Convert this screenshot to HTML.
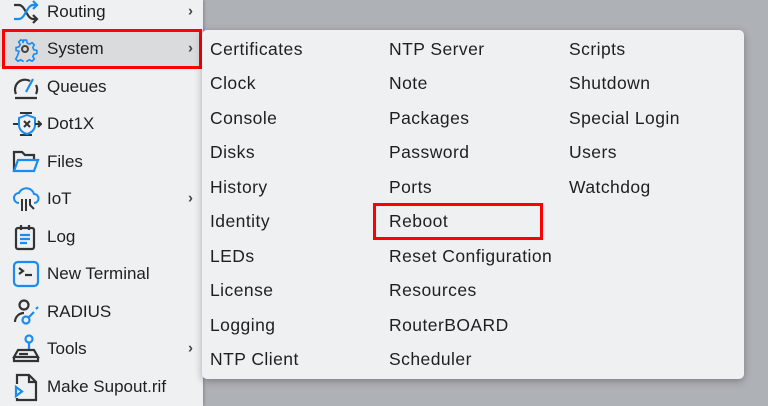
<!DOCTYPE html>
<html><head><meta charset="utf-8"><style>
html,body{margin:0;padding:0}
body{width:768px;height:406px;overflow:hidden;background:#aeb1b6;position:relative;font-family:"Liberation Sans",sans-serif;color:#1f1f1f}
#side{position:absolute;left:0;top:0;width:203px;height:406px;background:#eff0f2;box-shadow:1px 0 3px rgba(0,0,0,.25)}
.it{position:absolute;left:0;width:203px;height:37px;font-size:17px}
.it span{position:absolute;left:47px;top:50%;transform:translateY(-50%);white-space:nowrap}
.it svg{position:absolute;left:12px;top:50%;transform:translateY(-50%)}
.it b{position:absolute;right:10px;top:50%;transform:translateY(-55%);font-weight:bold;font-size:15px;color:#444}
.sel{background:#d9dbdd}
#red1{position:absolute;left:2px;top:29px;width:194px;height:34px;border:3px solid #f00}
#panel{position:absolute;left:202px;top:30px;width:542px;height:349px;background:#eff0f2;border-radius:5px;box-shadow:0 2px 8px rgba(0,0,0,.3)}
.c{position:absolute;font-size:17.5px;letter-spacing:0.45px;white-space:nowrap}
#red2{position:absolute;left:373px;top:203px;width:164px;height:31px;border:3.5px solid #f00}
</style></head><body>
<div id="side">
<div class="it" style="top:-7px"><svg width="28" height="26" viewBox="0 0 28 26" fill="none" stroke-width="2.2"><path d="M2 6h5c6 0 8 14 14 14h4" stroke="#333"/><path d="M2 20h5c6 0 8-14 14-14h4" stroke="#1a8cf0"/><path d="M21 2l4 4-4 4" stroke="#1a8cf0"/><path d="M21 16l4 4-4 4" stroke="#333"/></svg><span>Routing</span><b>›</b></div>
<div class="it sel" style="top:30px"><svg width="26" height="26" viewBox="0 0 28 28" fill="none" stroke="#1a8cf0" stroke-width="2.2"><path d="M12 2h4l1 4 3 1.5 3.5-2 3 3-2 3.5 1.5 3 4 1v4l-4 1-1.5 3 2 3.5-3 3-3.5-2-3 1.5-1 4h-4l-1-4-3-1.5-3.5 2-3-3 2-3.5L6 17l-4-1v-4l4-1 1.5-3-2-3.5 3-3 3.5 2L11 6z" transform="translate(2.8 2.8) scale(.8)"/><circle cx="14" cy="14" r="3.2" stroke="#444"/></svg><span>System</span><b>›</b></div>
<div class="it" style="top:68px"><svg width="28" height="28" viewBox="0 0 28 28" fill="none" stroke-width="2.2"><path d="M4 21a10 10 0 0 1 14-13" stroke="#333"/><path d="M24 12a10 10 0 0 1 0 9" stroke="#333"/><path d="M14 19l7-13" stroke="#1a8cf0"/><path d="M3 25h22" stroke="#333"/></svg><span>Queues</span></div>
<div class="it" style="top:105px"><svg width="30" height="30" viewBox="0 0 30 30" fill="none" stroke-width="2"><path d="M8 4h12M8 26h12" stroke="#333"/><path d="M7 9l8-3 8 3v7c0 5-4 8-8 9-4-1-8-4-8-9z" stroke="#1a8cf0"/><path d="M12 12l6 6M18 12l-6 6" stroke="#333"/><path d="M1 15h5M23 15h6l-3-3M29 15l-3 3" stroke="#333"/></svg><span>Dot1X</span></div>
<div class="it" style="top:143px"><svg width="28" height="26" viewBox="0 0 28 26" fill="none" stroke-width="2.2"><path d="M2 22V3h8l3 3h9v4" stroke="#333"/><path d="M2 22l4-11h20l-4 11z" stroke="#1a8cf0"/></svg><span>Files</span></div>
<div class="it" style="top:180px"><svg width="28" height="28" viewBox="0 0 28 28" fill="none" stroke-width="2"><path d="M7 18a5 5 0 0 1 0-10 8 8 0 0 1 15 1 4.5 4.5 0 0 1 0 9" stroke="#1a8cf0"/><path d="M10 14v12M14 14v12M18 14v6l4 4" stroke="#333"/></svg><span>IoT</span><b>›</b></div>
<div class="it" style="top:218px"><svg width="26" height="28" viewBox="0 0 26 28" fill="none" stroke-width="2.2"><rect x="4" y="5" width="18" height="21" rx="2" stroke="#333"/><path d="M9 2v5M17 2v5" stroke="#333"/><path d="M8 12h10M8 16h10M8 20h7" stroke="#1a8cf0"/></svg><span>Log</span></div>
<div class="it" style="top:255px"><svg width="28" height="28" viewBox="0 0 28 28" fill="none" stroke-width="2.2"><rect x="2" y="2" width="24" height="24" rx="4" stroke="#1a8cf0"/><path d="M7 8l4 3-4 3M13 15h7" stroke="#333"/></svg><span>New Terminal</span></div>
<div class="it" style="top:293px"><svg width="28" height="28" viewBox="0 0 28 28" fill="none" stroke-width="2.2"><circle cx="12" cy="7" r="4.5" stroke="#333"/><path d="M3 24a9 9 0 0 1 9-9" stroke="#333"/><circle cx="14" cy="22" r="3.5" stroke="#1a8cf0"/><path d="M17 19l5-5M24 11l2-2" stroke="#1a8cf0"/></svg><span>RADIUS</span></div>
<div class="it" style="top:330px"><svg width="28" height="30" viewBox="0 0 28 30" fill="none" stroke-width="2.2"><circle cx="17" cy="5" r="3.5" stroke="#1a8cf0"/><path d="M17 9v7" stroke="#1a8cf0"/><path d="M6 16h16l4 7H2z M2 23v4h24v-4" stroke="#333"/><path d="M7 20h9" stroke="#333"/></svg><span>Tools</span><b>›</b></div>
<div class="it" style="top:368px"><svg width="28" height="30" viewBox="0 0 28 30" fill="none" stroke-width="2.2"><path d="M5 12V3h12l7 7v18H5v-2" stroke="#333"/><path d="M17 3v7h7" stroke="#333"/><path d="M4 15v9l6-4.5z" stroke="#1a8cf0"/></svg><span>Make Supout.rif</span></div>
</div>
<div id="red1"></div>
<div id="panel"></div>
<div class="c" style="left:210px;top:39px">Certificates</div>
<div class="c" style="left:210px;top:73px">Clock</div>
<div class="c" style="left:210px;top:108px">Console</div>
<div class="c" style="left:210px;top:142px">Disks</div>
<div class="c" style="left:210px;top:177px">History</div>
<div class="c" style="left:210px;top:211px">Identity</div>
<div class="c" style="left:210px;top:246px">LEDs</div>
<div class="c" style="left:210px;top:280px">License</div>
<div class="c" style="left:210px;top:315px">Logging</div>
<div class="c" style="left:210px;top:349px">NTP Client</div>
<div class="c" style="left:389px;top:39px">NTP Server</div>
<div class="c" style="left:389px;top:73px">Note</div>
<div class="c" style="left:389px;top:108px">Packages</div>
<div class="c" style="left:389px;top:142px">Password</div>
<div class="c" style="left:389px;top:177px">Ports</div>
<div class="c" style="left:389px;top:211px">Reboot</div>
<div class="c" style="left:389px;top:246px">Reset Configuration</div>
<div class="c" style="left:389px;top:280px">Resources</div>
<div class="c" style="left:389px;top:315px">RouterBOARD</div>
<div class="c" style="left:389px;top:349px">Scheduler</div>
<div class="c" style="left:569px;top:39px">Scripts</div>
<div class="c" style="left:569px;top:73px">Shutdown</div>
<div class="c" style="left:569px;top:108px">Special Login</div>
<div class="c" style="left:569px;top:142px">Users</div>
<div class="c" style="left:569px;top:177px">Watchdog</div>
<div id="red2"></div>
</body></html>
